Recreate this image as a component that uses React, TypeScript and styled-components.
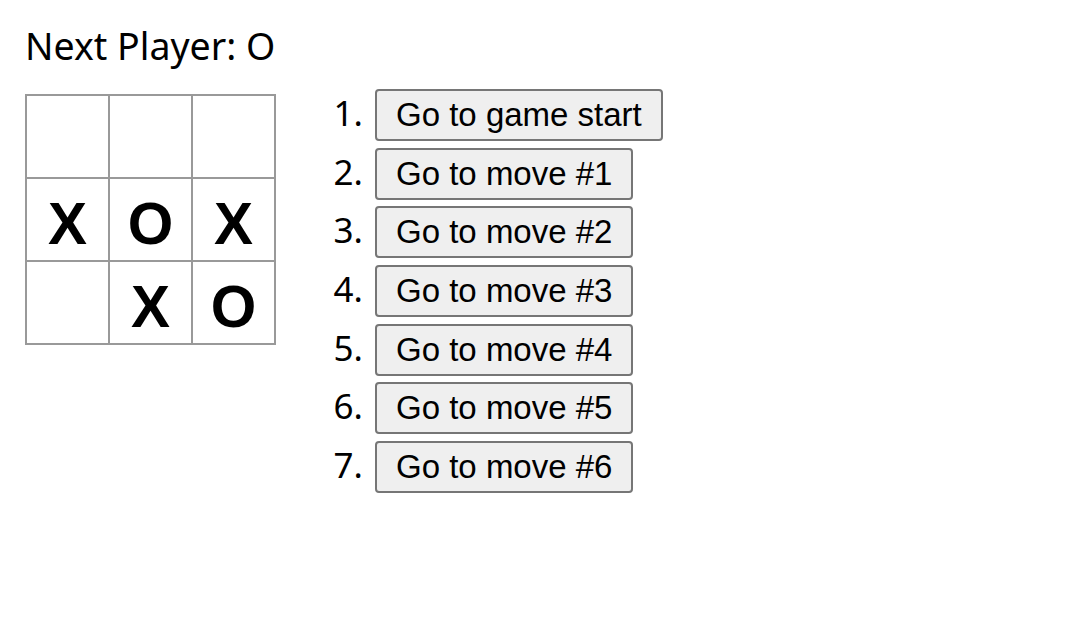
import React from 'react';
import styled, { createGlobalStyle } from 'styled-components';

type Cell = 'X' | 'O' | null;

const GlobalStyle = createGlobalStyle`
  html, body {
    margin: 0;
    padding: 0;
    background: #ffffff;
  }
  body {
    font-family: 'Noto Sans', 'Open Sans', sans-serif;
    color: #000000;
  }
`;

const Page = styled.div`
  padding: 0 0 0 25px;
`;

const Status = styled.div`
  margin-top: 27px;
  font-size: 37.5px;
  line-height: 1;
  height: 38px;
`;

const Game = styled.div`
  display: flex;
  align-items: flex-start;
`;

const Board = styled.div`
  margin-top: 29px;
  display: grid;
  grid-template-columns: repeat(3, 83px);
  grid-auto-rows: 83px;
  border-top: 2px solid #999999;
  border-left: 2px solid #999999;
`;

const Square = styled.button`
  box-sizing: border-box;
  width: 83px;
  height: 83px;
  margin: 0;
  padding: 8px 0 0 0;
  background: #ffffff;
  border: none;
  border-right: 2px solid #999999;
  border-bottom: 2px solid #999999;
  border-radius: 0;
  font-family: 'Liberation Sans', Arial, sans-serif;
  font-weight: 700;
  font-size: 58.5px;
  line-height: 73px;
  color: #000000;
  text-align: center;
`;

const History = styled.ol`
  margin: 24px 0 0 47px;
  padding: 0;
  list-style: none;
  display: flex;
  flex-direction: column;
  gap: 6.67px;
`;

const Move = styled.li`
  display: flex;
  align-items: flex-start;
  height: 52px;
`;

const Number = styled.span`
  width: 40px;
  margin-top: 6px;
  margin-right: 12px;
  text-align: right;
  font-size: 35px;
  line-height: 1;
`;

const JumpButton = styled.button`
  box-sizing: border-box;
  height: 52px;
  margin: 0;
  padding: 0 19px;
  background: #efefef;
  border: 2px solid #767676;
  border-radius: 4px;
  font-family: 'Liberation Sans', Arial, sans-serif;
  font-size: 33px;
  line-height: 48px;
  color: #000000;
  white-space: nowrap;
`;

const squares: Cell[] = [null, null, null, 'X', 'O', 'X', null, 'X', 'O'];
const moveCount = 7;

export default function App() {
  return (
    <Page>
      <GlobalStyle />
      <Status>Next Player: O</Status>
      <Game>
        <Board>
          {squares.map((value, i) => (
            <Square key={i}>{value}</Square>
          ))}
        </Board>
        <History>
          {Array.from({ length: moveCount }, (_, move) => (
            <Move key={move}>
              <Number>{move + 1}.</Number>
              <JumpButton>{move > 0 ? `Go to move #${move}` : 'Go to game start'}</JumpButton>
            </Move>
          ))}
        </History>
      </Game>
    </Page>
  );
}
